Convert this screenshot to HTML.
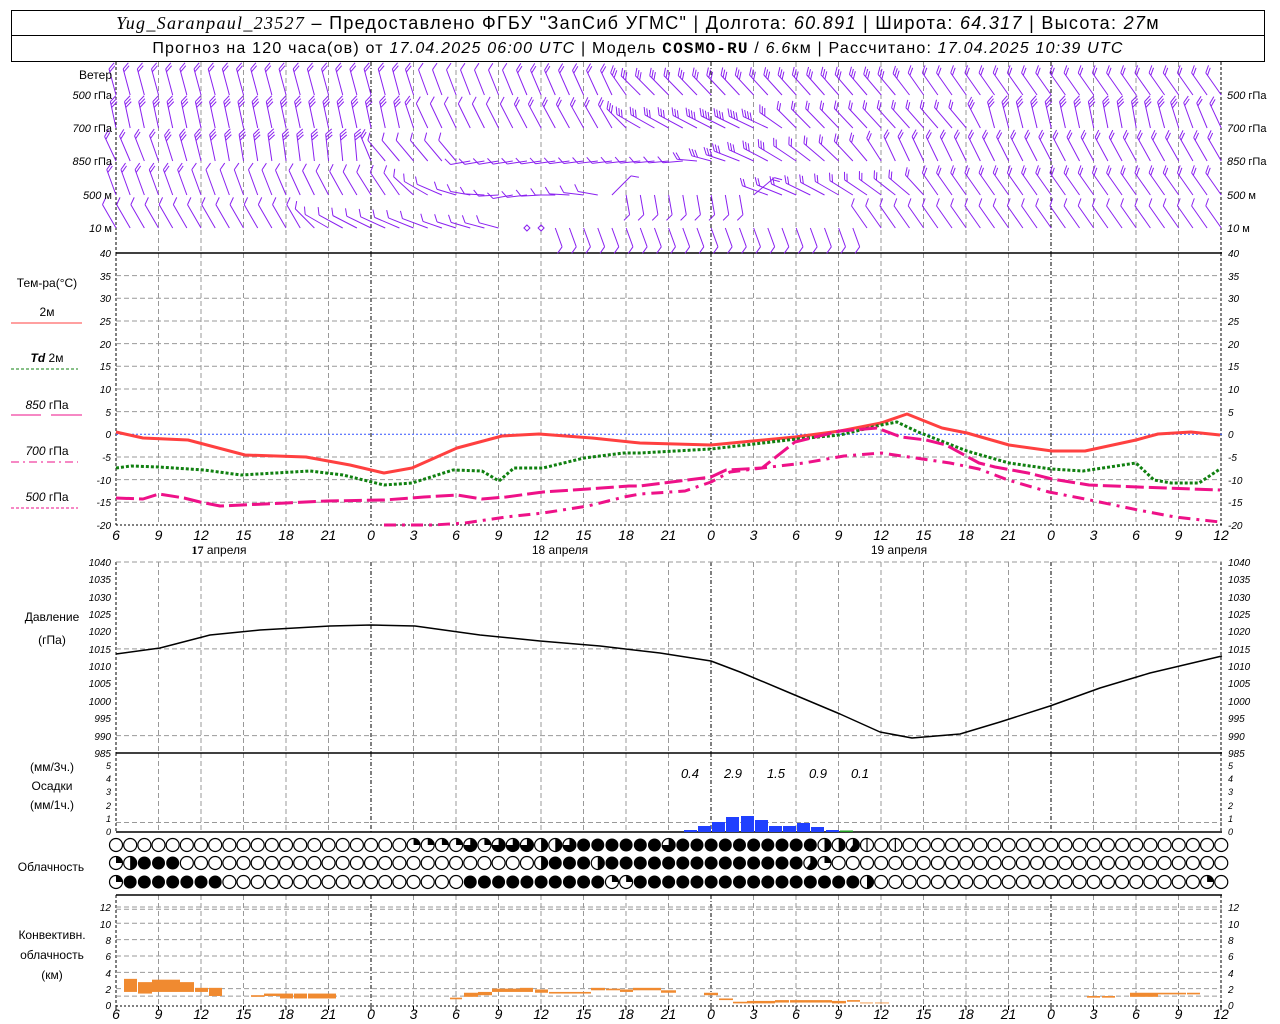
<!DOCTYPE html>
<html><head><meta charset="utf-8">
<style>
html,body{margin:0;padding:0;background:#fff;width:1280px;height:1024px;overflow:hidden}
svg{position:absolute;left:0;top:0}
.hd{position:absolute;left:11px;width:1254px;border:1px solid #000;text-align:center;font-family:"Liberation Sans",sans-serif;color:#000;white-space:pre;box-sizing:border-box}
.h1{top:10px;height:26px;font-size:18px;line-height:25px;letter-spacing:1.3px}
.h2{top:35px;height:27px;font-size:16px;line-height:26px;letter-spacing:1.2px}
.sr{font-family:"Liberation Serif",serif;font-style:italic}
.it{font-style:italic}
.b{font-family:"Liberation Mono",monospace;font-weight:bold}
text{font-family:"Liberation Sans",sans-serif}
.t{font-size:10px;font-style:italic;text-anchor:end}
.tr{font-size:10px;font-style:italic;text-anchor:start}
.ax{font-size:14px;font-style:italic;text-anchor:middle}
.lb{font-size:12px;text-anchor:middle}
.lw{font-size:11px;text-anchor:end}
</style></head><body>
<div class="hd h1"><span class="sr">Yug_Saranpaul_23527</span> – Предоставлено ФГБУ "ЗапСиб УГМС" | Долгота: <span class="it">60.891</span> | Широта: <span class="it">64.317</span> | Высота: <span class="it">27</span>м</div>
<div class="hd h2">Прогноз на 120 часа(ов) от <span class="it">17.04.2025 06:00 UTC</span> | Модель <span class="b">COSMO-RU</span> / <span class="it">6.6</span>км | Рассчитано: <span class="it">17.04.2025 10:39 UTC</span></div>
<svg id="g" width="1280" height="1024" xmlns="http://www.w3.org/2000/svg">
<g id="gr"></g>
<text x="112" y="79" class="lb" style="text-anchor:end">Ветер</text>
<text x="112" y="99" class="lw"><tspan font-style="italic">500</tspan> гПа</text>
<text x="112" y="132" class="lw"><tspan font-style="italic">700</tspan> гПа</text>
<text x="112" y="165" class="lw"><tspan font-style="italic">850</tspan> гПа</text>
<text x="112" y="199" class="lw"><tspan font-style="italic">500</tspan> м</text>
<text x="112" y="232" class="lw"><tspan font-style="italic">10</tspan>   м</text>
<text x="1227" y="99" class="lw" style="text-anchor:start"><tspan font-style="italic">500</tspan> гПа</text>
<text x="1227" y="132" class="lw" style="text-anchor:start"><tspan font-style="italic">700</tspan> гПа</text>
<text x="1227" y="165" class="lw" style="text-anchor:start"><tspan font-style="italic">850</tspan> гПа</text>
<text x="1227" y="199" class="lw" style="text-anchor:start"><tspan font-style="italic">500</tspan> м</text>
<text x="1227" y="232" class="lw" style="text-anchor:start"><tspan font-style="italic">10</tspan>   м</text>
<text x="47" y="287" class="lb">Тем-ра(°C)</text>
<text x="47" y="316" class="lb" font-size="11">2м</text>
<line x1="11" y1="323" x2="82" y2="323" stroke="#ff4040" stroke-width="1"/>
<text x="47" y="362" class="lb" font-size="11"><tspan font-style="italic" font-weight="bold">Td</tspan>  2м</text>
<line x1="11" y1="369" x2="78" y2="369" stroke="#108010" stroke-dasharray="3,2"/>
<text x="47" y="409" class="lb" font-size="11"><tspan font-style="italic">850</tspan> гПа</text>
<line x1="11" y1="415" x2="41" y2="415" stroke="#ee1188"/><line x1="51" y1="415" x2="82" y2="415" stroke="#ee1188"/>
<text x="47" y="455" class="lb" font-size="11"><tspan font-style="italic">700</tspan> гПа</text>
<line x1="11" y1="462" x2="78" y2="462" stroke="#ee1188" stroke-dasharray="8,4,2,4"/>
<text x="47" y="501" class="lb" font-size="11"><tspan font-style="italic">500</tspan> гПа</text>
<line x1="11" y1="508" x2="78" y2="508" stroke="#ee1188" stroke-dasharray="3,2"/>
<g class="t">
<text x="111" y="257">40</text><text x="111" y="280">35</text><text x="111" y="302">30</text><text x="111" y="325">25</text><text x="111" y="348">20</text><text x="111" y="370">15</text><text x="111" y="393">10</text><text x="111" y="416">5</text><text x="111" y="438">0</text><text x="111" y="461">-5</text><text x="111" y="484">-10</text><text x="111" y="506">-15</text><text x="111" y="529">-20</text>
</g>
<g class="tr">
<text x="1228" y="257">40</text><text x="1228" y="280">35</text><text x="1228" y="302">30</text><text x="1228" y="325">25</text><text x="1228" y="348">20</text><text x="1228" y="370">15</text><text x="1228" y="393">10</text><text x="1228" y="416">5</text><text x="1228" y="438">0</text><text x="1228" y="461">-5</text><text x="1228" y="484">-10</text><text x="1228" y="506">-15</text><text x="1228" y="529">-20</text>
</g>
<g class="ax">
<text x="116" y="540">6</text><text x="158.5" y="540">9</text><text x="201" y="540">12</text><text x="243.5" y="540">15</text><text x="286" y="540">18</text><text x="328.5" y="540">21</text><text x="371" y="540">0</text><text x="413.5" y="540">3</text><text x="456" y="540">6</text><text x="498.5" y="540">9</text><text x="541" y="540">12</text><text x="583.5" y="540">15</text><text x="626" y="540">18</text><text x="668.5" y="540">21</text><text x="711" y="540">0</text><text x="753.5" y="540">3</text><text x="796" y="540">6</text><text x="838.5" y="540">9</text><text x="881" y="540">12</text><text x="923.5" y="540">15</text><text x="966" y="540">18</text><text x="1008.5" y="540">21</text><text x="1051" y="540">0</text><text x="1093.5" y="540">3</text><text x="1136" y="540">6</text><text x="1178.5" y="540">9</text><text x="1221" y="540">12</text>
</g>
<text x="219" y="554" class="lb" font-size="13"><tspan font-weight="bold" font-family="Liberation Serif">17</tspan> апреля</text>
<text x="560" y="554" class="lb" font-size="13">18 апреля</text>
<text x="899" y="554" class="lb" font-size="13">19 апреля</text>
<text x="52" y="621" class="lb">Давление</text>
<text x="52" y="644" class="lb">(гПа)</text>
<g class="t">
<text x="111" y="566">1040</text><text x="111" y="583">1035</text><text x="111" y="601">1030</text><text x="111" y="618">1025</text><text x="111" y="635">1020</text><text x="111" y="653">1015</text><text x="111" y="670">1010</text><text x="111" y="687">1005</text><text x="111" y="705">1000</text><text x="111" y="722">995</text><text x="111" y="740">990</text><text x="111" y="757">985</text>
</g>
<g class="tr">
<text x="1228" y="566">1040</text><text x="1228" y="583">1035</text><text x="1228" y="601">1030</text><text x="1228" y="618">1025</text><text x="1228" y="635">1020</text><text x="1228" y="653">1015</text><text x="1228" y="670">1010</text><text x="1228" y="687">1005</text><text x="1228" y="705">1000</text><text x="1228" y="722">995</text><text x="1228" y="740">990</text><text x="1228" y="757">985</text>
</g>
<text x="52" y="771" class="lb">(мм/3ч.)</text>
<text x="52" y="790" class="lb">Осадки</text>
<text x="52" y="809" class="lb">(мм/1ч.)</text>
<g class="t" style="font-size:9px">
<text x="111" y="769">5</text><text x="111" y="782">4</text><text x="111" y="795">3</text><text x="111" y="809">2</text><text x="111" y="822">1</text><text x="111" y="835">0</text>
</g>
<g class="tr" style="font-size:9px">
<text x="1228" y="769">5</text><text x="1228" y="782">4</text><text x="1228" y="795">3</text><text x="1228" y="809">2</text><text x="1228" y="822">1</text><text x="1228" y="835">0</text>
</g>
<g class="ax" style="font-size:13px">
<text x="690" y="778">0.4</text><text x="733" y="778">2.9</text><text x="776" y="778">1.5</text><text x="818" y="778">0.9</text><text x="860" y="778">0.1</text>
</g>
<text x="51" y="871" class="lb">Облачность</text>
<text x="52" y="939" class="lb">Конвективн.</text>
<text x="52" y="959" class="lb">облачность</text>
<text x="52" y="979" class="lb">(км)</text>
<g class="t">
<text x="111" y="911">12</text><text x="111" y="928">10</text><text x="111" y="944">8</text><text x="111" y="960">6</text><text x="111" y="977">4</text><text x="111" y="993">2</text><text x="111" y="1009">0</text>
</g>
<g class="tr">
<text x="1228" y="911">12</text><text x="1228" y="928">10</text><text x="1228" y="944">8</text><text x="1228" y="960">6</text><text x="1228" y="977">4</text><text x="1228" y="993">2</text><text x="1228" y="1009">0</text>
</g>
<g class="ax">
<text x="116" y="1019">6</text><text x="158.5" y="1019">9</text><text x="201" y="1019">12</text><text x="243.5" y="1019">15</text><text x="286" y="1019">18</text><text x="328.5" y="1019">21</text><text x="371" y="1019">0</text><text x="413.5" y="1019">3</text><text x="456" y="1019">6</text><text x="498.5" y="1019">9</text><text x="541" y="1019">12</text><text x="583.5" y="1019">15</text><text x="626" y="1019">18</text><text x="668.5" y="1019">21</text><text x="711" y="1019">0</text><text x="753.5" y="1019">3</text><text x="796" y="1019">6</text><text x="838.5" y="1019">9</text><text x="881" y="1019">12</text><text x="923.5" y="1019">15</text><text x="966" y="1019">18</text><text x="1008.5" y="1019">21</text><text x="1051" y="1019">0</text><text x="1093.5" y="1019">3</text><text x="1136" y="1019">6</text><text x="1178.5" y="1019">9</text><text x="1221" y="1019">12</text>
</g>
</svg>
<script>
(function(){
var S='http://www.w3.org/2000/svg',G=document.getElementById('gr');
function el(n,a){var e=document.createElementNS(S,n);for(var k in a)e.setAttribute(k,a[k]);G.appendChild(e);return e;}
function ln(x1,y1,x2,y2,c,w,d){el('line',{x1:x1,y1:y1,x2:x2,y2:y2,stroke:c,'stroke-width':w||1,'stroke-dasharray':d||'none'});}
var L=116,R=1222;
var panels=[[62,253],[253,525],[562,753],[753,832],[895,1006]];
for(var i=0;i<=26;i++){var x=L+42.5*i;
 panels.forEach(function(p){
  if(i==0||i==26) ln(x,p[0],x,p[1],'#000',1,'3,2');
  else if(i%8==6) ln(x,p[0],x,p[1],'#000',1,'4,2,1,2');
  else ln(x,p[0],x,p[1],'#999',1,'5,3');
 });
 ln(x,1006,x,1010,'#000',1);
}
for(var t=35;t>=-15;t-=5){var y=434.3-t*4.533;if(t==0)ln(L,y,R,y,'#3050ff',1,'2,2');else ln(L,y,R,y,'#999',1,'5,3');}
for(var p=1040;p>=990;p-=5){var y=562+(1040-p)*17.364;ln(L,y,R,y,'#999',1,'5,3');}
for(var k=2;k<=12;k+=2){var y=1005-k*8.17;ln(L,y,R,y,'#999',1,'5,3');}
ln(L,253,R,253,'#000',1.5);ln(L,525,R,525,'#000',1,'2,2');
ln(L,753,R,753,'#000',1.5);ln(L,832,R,832,'#000',1.5);ln(L,895,R,895,'#000',1.5);ln(L,1006,R,1006,'#000',1,'2,2');
function pl(pts,c,w,d){el('polyline',{points:pts,fill:'none',stroke:c,'stroke-width':w,'stroke-dasharray':d||'none','stroke-linejoin':'round'});}
pl('116,432 143,438 188,440 245,455 306,457 350,465 384,473 412,468 457,448 502,436 539,434 592,438 640,443 711,445 795,437 840,431 881,423 907,414 942,428 967,433 1009,445 1052,451 1085,451 1136,440 1158,434 1191,432 1220,435','#ff4040',3);
pl('116,468 131,466 159,467 204,470 241,475 310,471 343,475 384,485 412,483 453,470 482,471 499,481 514,468 543,468 584,458 624,453 640,453 711,449 797,439 840,435 881,425 897,422 918,432 967,451 1009,463 1051,469 1083,471 1136,463 1154,480 1171,483 1199,483 1220,469','#108010',3,'3,2');
pl('116,498 143,499 159,494 184,498 200,502 220,506 286,503 327,501 384,500 424,497 457,495 482,499 506,497 543,492 588,489 629,486 640,486 711,477 726,470 762,468 795,442 840,431 877,428 901,437 926,440 946,445 979,463 995,467 1028,473 1052,479 1089,485 1138,487 1166,488 1220,490','#ee1188',3,'18,5');
pl('384,525 433,525 465,523 506,517 543,513 588,506 624,497 640,494 685,491 711,482 730,472 762,468 804,463 844,456 881,453 909,457 950,463 979,469 1008,480 1049,492 1085,499 1138,510 1175,517 1220,522','#ee1188',3,'12,6,3,6');
pl('116,654 160,648 210,635 260,630 330,626 371,625 415,626 480,635 540,641 600,646 660,653 711,661 740,672 790,693 840,714 880,732 912,738 960,734 1000,722 1050,706 1100,688 1150,673 1222,656','#000',1.5);
[[684,697,830],[698,711,826],[712,725,822],[726,739,817],[741,754,816],[755,768,820],[769,782,826],[783,796,826],[797,810,823],[811,824,827],[826,839,830]].forEach(function(b){el('rect',{x:b[0],y:b[2],width:b[1]-b[0],height:832-b[2],fill:'#2040ff'});});
el('rect',{x:840,y:830.5,width:13,height:1.5,fill:'#20a020'});
function ky(v){return 1005-v*8.17;}
[[124,137,1.6,3.2],[138,152,1.4,2.8],[152,180,1.6,3.1],[180,194,1.6,2.8],[195,208,1.6,2.1],[209,222,1.1,2.1],[251,264,1.0,1.2],[264,280,1.1,1.4],[280,293,0.8,1.4],[294,307,0.8,1.4],[308,336,0.8,1.4],[450,462,0.7,0.9],[464,478,1.0,1.5],[478,492,1.2,1.6],[492,520,1.6,2.0],[520,533,1.6,2.1],[535,548,1.5,1.9],[549,591,1.4,1.6],[591,605,1.8,2.1],[606,620,1.8,2.0],[620,633,1.6,1.9],[633,661,1.8,2.1],[661,676,1.5,1.8],[704,718,1.2,1.5],[719,733,0.6,0.8],[733,747,0.2,0.4],[747,775,0.2,0.5],[775,789,0.3,0.6],[790,832,0.3,0.6],[832,846,0.2,0.5],[847,860,0.4,0.6],[860,873,0.2,0.3],[875,889,0.2,0.3],[1087,1100,0.9,1.1],[1102,1115,0.9,1.1],[1130,1158,1.0,1.5],[1158,1186,1.3,1.5],[1187,1200,1.3,1.5]].forEach(function(b){el('rect',{x:b[0],y:ky(b[3]),width:b[1]-b[0],height:(b[3]-b[2])*8.17,fill:'#f08a30'});});
function fr(row,k){
 if(row==0){if(k<=20)return 0;var m={21:.25,22:.25,23:.25,24:.25,25:.75,26:.25,27:.75,28:.75,29:.75,30:.5,31:.5,32:.75,39:.75,50:.5,51:.5,52:.6,53:.1,55:.1};if(m[k]!==undefined)return m[k];if(k>=33&&k<=49)return 1;return 0;}
 if(row==1){var m={0:.25,1:.5,30:.5,34:.5,49:.6,50:.25};if(m[k]!==undefined)return m[k];if((k>=2&&k<=4)||(k>=31&&k<=48))return 1;return 0;}
 var m={0:.25,35:.25,36:.25,53:.5,77:.25};if(m[k]!==undefined)return m[k];if((k>=1&&k<=7)||(k>=25&&k<=52))return 1;return 0;
}
var rows=[845,863,882];
for(var r=0;r<3;r++)for(var k=0;k<=78;k++){var cx=116+k*14.17,cy=rows[r],f=fr(r,k),rr=6.5;
 if(f>=1){el('circle',{cx:cx,cy:cy,r:rr,fill:'#000'});continue;}
 el('circle',{cx:cx,cy:cy,r:rr,fill:'#fff',stroke:'#000','stroke-width':1.2});
 if(f>0){var a=-Math.PI/2+2*Math.PI*f,ex=cx+rr*Math.cos(a),ey=cy+rr*Math.sin(a);
  if(f<0.2){ln(cx,cy-rr,cx,cy+rr,'#000',1.2);continue;}
  el('path',{d:'M'+cx+','+cy+' L'+cx+','+(cy-rr)+' A'+rr+','+rr+' 0 '+(f>0.5?1:0)+' 1 '+ex+','+ey+' Z',fill:'#000'});}
}
var W=[
 {y:95,kf:[[0,-15,2],[20,-15,2],[22,-20,1],[35,-25,2],[37,-45,3],[55,-40,3],[57,-35,2],[78,-35,2]]},
 {y:128,kf:[[0,-12,3],[20,-12,3],[22,-25,1],[35,-30,2],[37,-60,3],[46,-65,4],[48,-45,2],[60,-40,2],[62,-15,3],[72,-10,3],[78,-25,2]]},
 {y:161,kf:[[0,-25,2],[8,-10,3],[17,-5,3],[19,-40,1],[24,-40,1],[25,-100,1],[40,-95,1],[42,-75,3],[53,-40,2],[55,-25,2],[78,-30,2]]},
 {y:195,kf:[[0,-20,2],[10,-20,1],[20,-35,1],[22,-60,1],[28,-100,1],[34,-80,1],[36,170,1],[44,170,1],[46,-70,2],[56,-50,2],[58,-35,2],[78,-35,2]]},
 {y:228,kf:[[0,-30,1],[13,-30,1],[15,-60,1],[26,-75,1],[28,-75,1],[31,160,1],[52,160,1],[53,-35,1],[78,-35,1]]}
];
function interp(kf,k){for(var i=0;i<kf.length-1;i++){if(k>=kf[i][0]&&k<=kf[i+1][0]){var t=(k-kf[i][0])/((kf[i+1][0]-kf[i][0])||1);return [kf[i][1]+(kf[i+1][1]-kf[i][1])*t,Math.round(kf[i][2]+(kf[i+1][2]-kf[i][2])*t)];}}return [kf[kf.length-1][1],kf[kf.length-1][2]];}
var C='#8a20f0';
W.forEach(function(row,ri){for(var k=0;k<=78;k++){var x=116+k*14.17,y=row.y;
 if(ri==4&&(k==29||k==30)){el('path',{d:'M'+(x-3)+','+y+' L'+x+','+(y-3)+' L'+(x+3)+','+y+' L'+x+','+(y+3)+' Z',fill:'none',stroke:C,'stroke-width':1});continue;}
 if(ri==4&&k==28)continue;
 var v=interp(row.kf,k),a=v[0]*Math.PI/180,n=v[1];
 var Ln=Math.abs(v[0])>70?20:(Math.abs(v[0])>120?22:27);
 var tx=x+Ln*Math.sin(a),ty=y-Ln*Math.cos(a);
 ln(x,y,tx,ty,C,1);
 var fa=a+55*Math.PI/180;
 for(var j=0;j<n;j++){var px=tx-(j*3)*Math.sin(a),py=ty+(j*3)*Math.cos(a);
  ln(px,py,px+8*Math.sin(fa),py-8*Math.cos(fa),C,1);}
}});
})();
</script>
</body></html>
